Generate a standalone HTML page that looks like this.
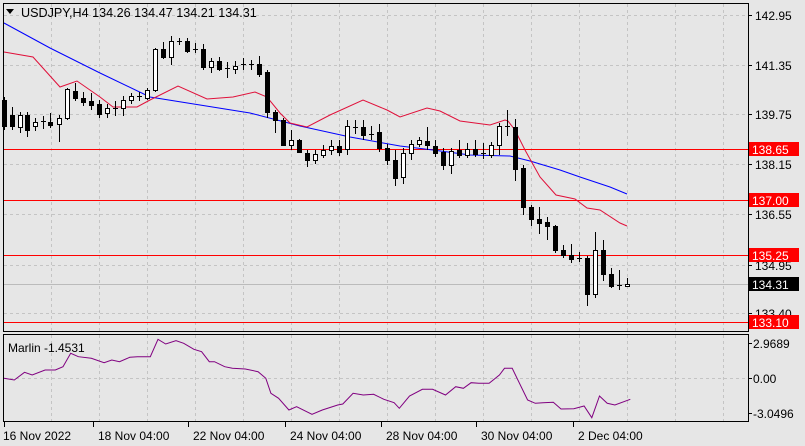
<!DOCTYPE html>
<html><head><meta charset="utf-8"><style>
html,body{margin:0;padding:0;background:#e6e6e6;width:805px;height:446px;overflow:hidden}
svg{display:block}
text{font-family:"Liberation Sans",sans-serif;font-size:12px;fill:#000}
</style></head><body>
<svg id="s" width="805" height="446" xmlns="http://www.w3.org/2000/svg">
<rect width="805" height="446" fill="#e6e6e6"/>
<g id="grid" stroke="#c4c4c4" stroke-dasharray="3,3" stroke-width="1"></g>
<g id="hl"></g>
<polyline id="blue" fill="none" stroke="#0000ff" stroke-width="1"/>
<polyline id="red" fill="none" stroke="#e0103a" stroke-width="1"/>
<g id="c"></g>
<polyline id="mar" fill="none" stroke="#800080" stroke-width="1"/>
<rect x="3.5" y="3.5" width="745" height="328" fill="none" stroke="#000"/>
<rect x="3.5" y="334.5" width="745" height="87" fill="none" stroke="#000"/>
<g id="lab"></g>
<path d="M6 9 L14 9 L10 14 Z" fill="#000"/>
<text x="21" y="17" style="font-size:12.6px">USDJPY,H4  134.26 134.47 134.21 134.31</text>
<text x="8" y="352">Marlin -1.4531</text>
</svg>
<script>
var NS="http://www.w3.org/2000/svg",s=document.getElementById('s');
function el(p,t,a,txt){var e=document.createElementNS(NS,t);for(var k in a)e.setAttribute(k,a[k]);if(txt!=null)e.textContent=txt;document.getElementById(p).appendChild(e);return e;}
for(var x=51;x<748;x+=48){el('grid','line',{x1:x+.5,y1:4,x2:x+.5,y2:331});el('grid','line',{x1:x+.5,y1:335,x2:x+.5,y2:421});}
[15,65,114,164,214,265,313].forEach(function(y){el('grid','line',{x1:4,y1:y+.5,x2:748,y2:y+.5});});
el('grid','line',{x1:4,y1:378.5,x2:748,y2:378.5});
el('grid','line',{x1:4,y1:284.5,x2:748,y2:284.5,stroke:'#bbb','stroke-dasharray':'none'});
[149,200,255,322].forEach(function(y){el('hl','line',{x1:4,y1:y+.5,x2:748,y2:y+.5,stroke:'#ff0000'});});
document.getElementById('blue').setAttribute('points',"4,23 50,48 100,73 150,97 200,105 250,113 300,126 350,137 400,146 433,150 470,155 510,156 530,161 560,170 580,177 610,187 627,194");
document.getElementById('red').setAttribute('points',"4,52 33,57 60,87 77,81 100,97 113,107 137,107 150,100 178,86 207,99 233,97 255,92 267,97 280,113 290,123 307,127 330,115 363,100 387,110 400,117 427,108 440,111 460,121 490,125 505,120 508,121 515,130 525,150 540,177 556,195 575,199 587,208 600,210 620,223 627,226");
var C=[[4,100,126,'b',97,130],[12,115,126,'b',107,130],[20,115,127,'w',112,133],[27,115,130,'b',112,137],[35,122,126,'w',118,131],[43,121,122,'x',116,129],[50,122,125,'b',113,128],[59,118,124,'w',115,142],[67,89,118,'w',88,120],[75,91,98,'b',83,101],[83,98,102,'b',92,106],[91,101,105,'b',93,110],[99,104,114,'b',100,118],[107,108,113,'w',104,118],[115,108,109,'x',101,116],[123,100,108,'w',96,116],[131,96,100,'w',93,104],[139,96,97,'x',92,101],[147,90,98,'w',88,100],[155,49,90,'w',48,92],[163,49,57,'b',42,59],[171,41,57,'w',36,65],[179,41,42,'x',38,45],[187,41,51,'b',38,53],[195,49,50,'x',43,53],[203,49,67,'b',44,70],[211,61,67,'w',58,73],[219,61,69,'b',57,71],[227,68,69,'x',62,78],[235,66,69,'w',61,74],[243,64,65,'x',58,70],[251,64,65,'x',60,70],[259,64,74,'b',56,77],[267,72,112,'b',70,118],[275,112,120,'b',110,133],[283,120,145,'b',118,146],[291,140,145,'w',130,150],[299,140,152,'b',139,153],[307,153,160,'b',150,167],[315,154,160,'w',150,164],[323,150,155,'w',145,158],[331,146,150,'w',140,155],[339,146,152,'b',140,156],[347,126,149,'w',120,155],[355,127,128,'x',120,134],[363,127,135,'b',120,140],[371,134,135,'x',126,140],[379,132,148,'b',124,152],[387,148,160,'b',144,165],[395,160,178,'b',150,186],[403,153,177,'w',148,184],[411,144,153,'w',140,160],[419,140,144,'w',137,147],[427,141,145,'b',127,150],[435,146,153,'b',140,157],[443,152,165,'b',148,170],[451,151,165,'w',148,174],[459,150,155,'b',140,158],[467,149,155,'w',143,158],[475,149,154,'b',140,157],[483,153,154,'x',143,159],[491,145,155,'w',142,158],[499,126,145,'w',123,155],[507,126,127,'x',110,136],[515,127,169,'b',119,181],[523,168,207,'b',165,215],[531,207,219,'b',205,226],[539,219,223,'b',207,234],[547,222,226,'b',217,240],[555,226,250,'b',225,253],[563,250,255,'b',245,258],[571,255,259,'b',244,263],[579,258,259,'x',252,262],[587,258,294,'b',256,306],[595,250,294,'w',232,298],[603,250,274,'b',240,281],[611,274,286,'b',268,288],[619,285,286,'x',270,290],[627,284,286,'w',278,287]];
C.forEach(function(c){var x=c[0];el('c','line',{x1:x+.5,y1:c[4],x2:x+.5,y2:c[5],stroke:'#000'});
 if(c[3]=='x'){el('c','line',{x1:x-2,y1:c[1]+.5,x2:x+3,y2:c[1]+.5,stroke:'#000'});}
 else el('c','rect',{x:x-2+.5,y:c[1]+.5,width:4,height:Math.max(1,c[2]-c[1]),fill:c[3]=='w'?'#fff':'#000',stroke:'#000'});});
var M=[[0,235],[20,240],[40,217],[55,225],[80,210],[100,210],[115,200],[130,160],[145,170],[170,175],[195,188],[210,180],[225,185],[245,172],[260,170],[285,170],[300,118],[315,132],[335,122],[350,130],[370,148],[385,155],[400,185],[410,185],[430,200],[445,205],[470,207],[495,215],[510,235],[520,280],[535,295],[555,330],[570,320],[600,343],[620,330],[650,315],[660,312],[680,280],[700,285],[720,283],[740,298],[760,308],[770,325],[790,288],[815,268],[835,268],[860,285],[880,260],[895,265],[910,248],[925,250],[945,250],[965,225],[975,205],[990,205],[1020,300],[1035,310],[1050,308],[1070,307],[1085,327],[1110,326],[1130,318],[1145,353],[1160,288],[1175,310],[1190,315],[1220,298]];
document.getElementById('mar').setAttribute('points',M.map(function(p){return (4+p[0]/1.948).toFixed(1)+','+(p[1]/3+300).toFixed(1)}).join(' '));
[['142.95',15],['141.35',65],['139.75',114],['138.15',164],['136.55',214],['134.95',265],['133.40',313]].forEach(function(l){el('lab','line',{x1:748,y1:l[1]+.5,x2:752,y2:l[1]+.5,stroke:'#000'});el('lab','text',{x:755,y:l[1]+5,fill:'#0a0a30'},l[0]);});
[['138.65',149,'#ff0000'],['137.00',200,'#ff0000'],['135.25',255,'#ff0000'],['134.31',284,'#000'],['133.10',322,'#ff0000']].forEach(function(l){el('lab','rect',{x:749,y:l[1]-7,width:50,height:14,fill:l[2]});el('lab','text',{x:752,y:l[1]+5,style:'fill:#fff'},l[0]);});
[['2.9689',343],['0.00',378],['-3.0496',413]].forEach(function(l){el('lab','line',{x1:748,y1:l[1]+.5,x2:752,y2:l[1]+.5,stroke:'#000'});el('lab','text',{x:753,y:l[1]+5},l[0]);});
[['16 Nov 2022',3],['18 Nov 04:00',98],['22 Nov 04:00',193],['24 Nov 04:00',290],['28 Nov 04:00',386],['30 Nov 04:00',481],['2 Dec 04:00',578]].forEach(function(l,i){var tx=i==0?4:l[1]-5;el('lab','line',{x1:tx+.5,y1:422,x2:tx+.5,y2:427,stroke:'#000'});el('lab','text',{x:l[1],y:440},l[0]);});
</script>
</body></html>
